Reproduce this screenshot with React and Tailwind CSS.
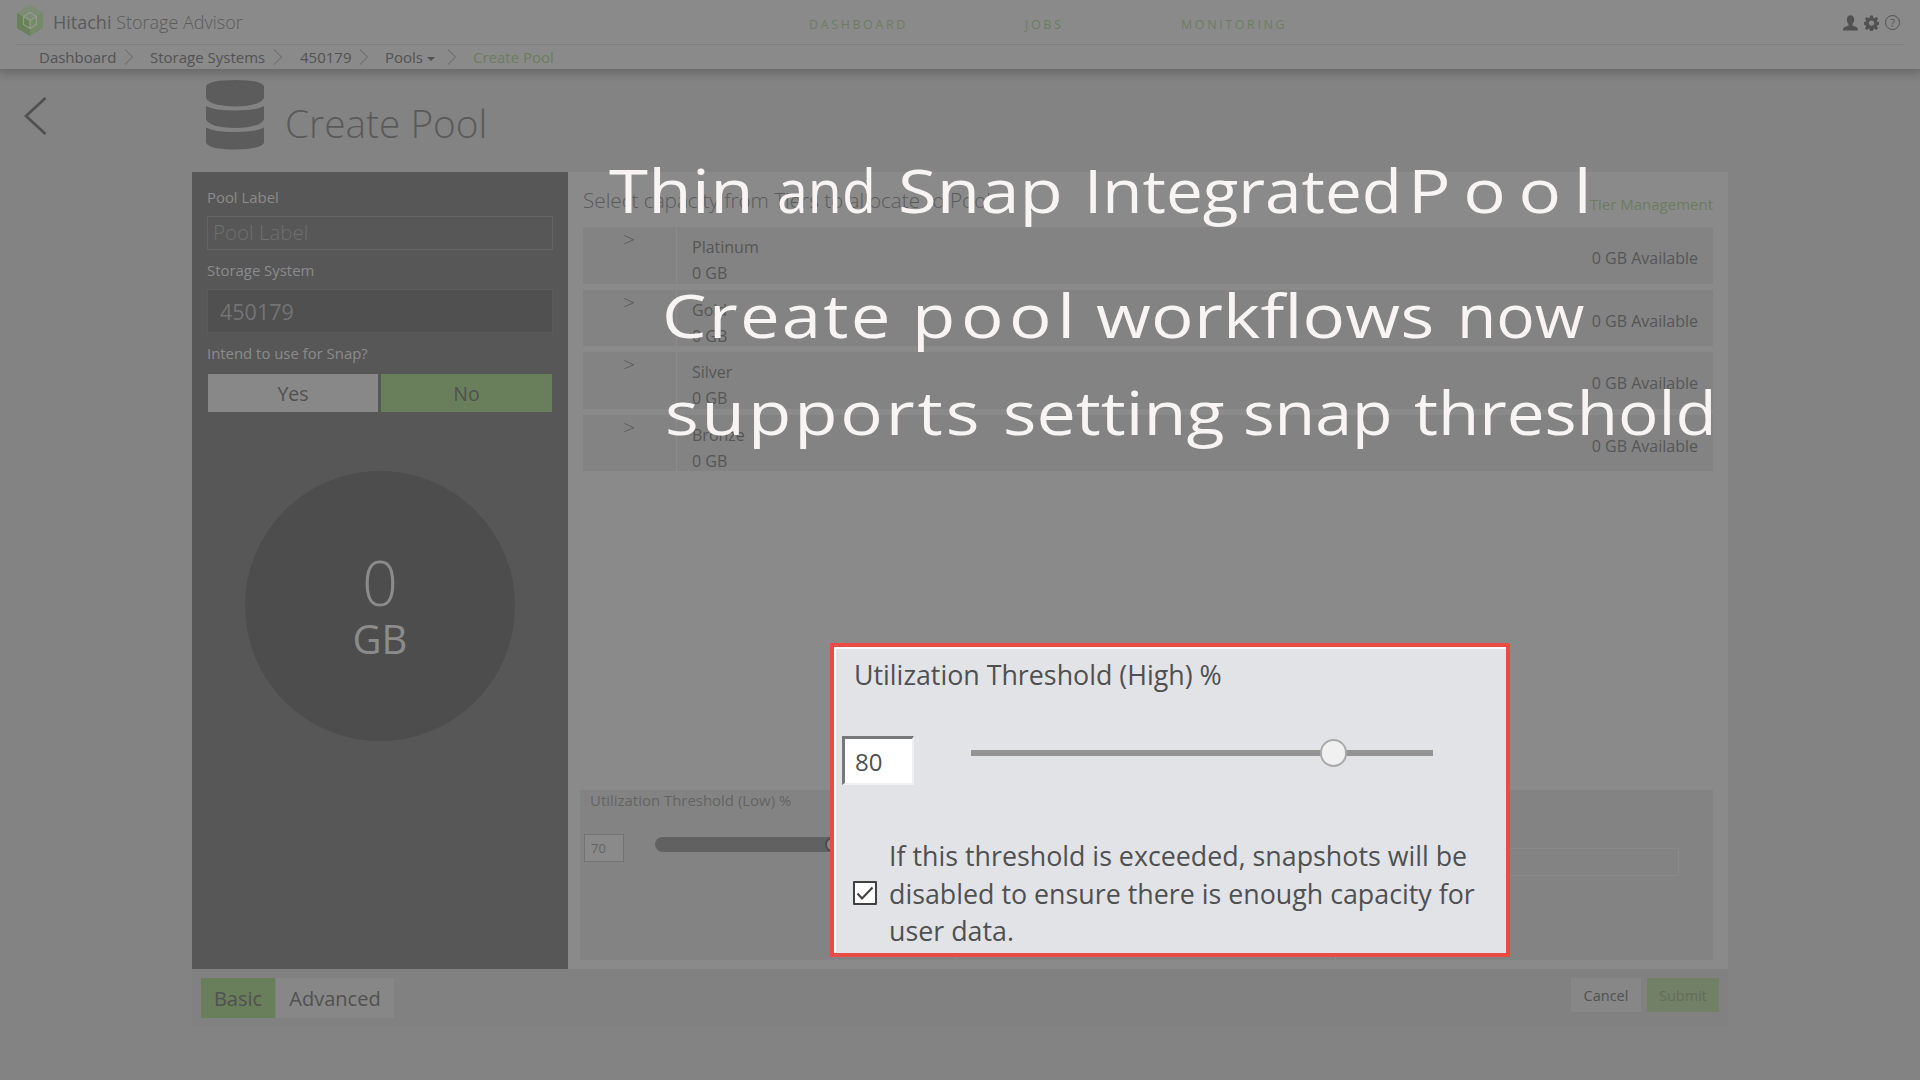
import { useLayoutEffect, useRef } from 'react';

const tiers = [
  { name: 'Platinum', row: 'h-[57px]' },
  { name: 'Gold', row: 'h-[56px]' },
  { name: 'Silver', row: 'h-[57px]' },
  { name: 'Bronze', row: 'h-[56px]' },
];

const notes = [
  { text: 'Thin', x: 609, y: 213, w: 145 },
  { text: 'and', x: 777, y: 213, w: 99 },
  { text: 'Snap', x: 898, y: 213, w: 165 },
  { text: 'Integrated', x: 1084, y: 213, w: 318 },
  { text: 'Pool', x: 1408, y: 213, w: 183 },
  { text: 'Create', x: 662, y: 338, w: 228 },
  { text: 'pool', x: 912, y: 338, w: 163 },
  { text: 'workflows', x: 1096, y: 338, w: 338 },
  { text: 'now', x: 1457, y: 338, w: 127 },
  { text: 'supports', x: 665, y: 435, w: 314 },
  { text: 'setting', x: 1003, y: 435, w: 222 },
  { text: 'snap', x: 1243, y: 435, w: 149 },
  { text: 'threshold', x: 1414, y: 435, w: 303 },
];

// One word of the annotation: widened by up to 18%, then letter-spaced to its width.
function Note({ text, x, y, w }) {
  const ref = useRef(null);
  useLayoutEffect(() => {
    const el = ref.current;
    el.style.letterSpacing = '0px';
    const natural = el.offsetWidth;
    const scale = Math.min(w / natural, 1.18);
    el.style.letterSpacing = `${(w / scale - natural) / (text.length - 1)}px`;
    el.style.transform = `scaleX(${scale})`;
  }, [text, w]);
  return (
    <span
      ref={ref}
      className="absolute origin-left whitespace-nowrap text-[60px] leading-[60px] text-[#f8f4f4]"
      style={{ left: x, top: y - 53 }}
    >
      {text}
    </span>
  );
}

function Chevron({ className }) {
  return (
    <svg className={'h-4 w-[10px] shrink-0 ' + className} viewBox="0 0 10 16" fill="none" stroke="#747474" strokeWidth="1.2">
      <path d="M1 .5 8.5 8 1 15.5" />
    </svg>
  );
}

function Header() {
  return (
    <header className="relative h-[69px] bg-[#8a8a8a] shadow-[0_2px_9px_2px_rgba(60,60,60,0.4)]">
      <div className="mx-[15px] flex h-[45px] border-b border-[#808080]">
        <svg className="mt-[5px] ml-[2px] h-[31px] w-[26px] shrink-0" viewBox="0 0 26 31">
          <path d="M13 0 26 8v15l-13 8L0 23V8z" fill="#758a69" />
          <path d="M0 8 13 15.5V31L0 23z" fill="#698058" />
          <path d="M13 0 26 8 13 15.5 0 8z" fill="#7d8c74" />
          <path d="M13 7.5 19.5 11.5v8L13 23.5l-6.500-4v-8zM6.500 11.500 13 15.500l6.500-4M13 15.500v8" fill="none" stroke="#929c8b" strokeWidth="1.200" />
        </svg>
        <div className="ml-[10px] w-[190px] text-[18px] leading-[45px] font-light whitespace-nowrap text-[#5a5a5a]">
          <span className="font-normal">Hitachi</span> Storage Advisor
        </div>
        <nav className="ml-[566px] flex text-[12.500px] leading-[50px] tracking-[2.600px] text-[#6d7d62]">
          <span className="w-[216px]">DASHBOARD</span>
          <span className="w-[156px]">JOBS</span>
          <span>MONITORING</span>
        </nav>
        <div className="mt-[15px] mr-[5px] ml-auto flex gap-[6px]">
          <svg className="h-4 w-[15px]" viewBox="0 0 15 16" fill="#515151">
            <ellipse cx="7.500" cy="4.800" rx="3.700" ry="4.600" />
            <path d="M5.500 8h4v2.700l4 1.300q1.500.6 1.500 3.500H0q0-2.900 1.500-3.500l4-1.300z" />
          </svg>
          <svg className="h-4 w-[15px]" viewBox="0 0 16 16" fill="#515151" fillRule="evenodd">
            <path d="M6.600 0h2.800l.4 2.200 1.300.6 1.900-1.300 2 2-1.300 1.900.6 1.300 2.200.4v2.800l-2.200.4-.6 1.300 1.300 1.900-2 2-1.900-1.300-1.300.6-.4 2.200H6.600l-.4-2.200-1.300-.6L3 15.500l-2-2 1.300-1.900-.6-1.300-2.200-.4V7.100l2.200-.4.6-1.300L1 3.500l2-2 1.900 1.300 1.300-.6zM8 5.200a2.800 2.800 0 1 0 0 5.600 2.800 2.800 0 0 0 0-5.600z" />
          </svg>
          <div className="flex h-[15px] w-[15px] items-center justify-center rounded-full border border-[#515151] text-[11px] leading-none text-[#515151]">?</div>
        </div>
      </div>
      <div className="flex h-6 items-center pl-[39px] text-[15px] leading-6 whitespace-nowrap text-[#535353]">
        <span className="w-[85px]">Dashboard</span>
        <Chevron className="" />
        <span className="ml-[16px] w-[123px]">Storage Systems</span>
        <Chevron className="" />
        <span className="ml-[17px] w-[59px]">450179</span>
        <Chevron className="" />
        <span className="ml-[16px] w-[42px]">Pools</span>
        <span className="mt-[3px] h-0 w-0 border-x-4 border-t-4 border-x-transparent border-t-[#515151]" />
        <Chevron className="ml-[12px]" />
        <span className="ml-[16px] text-[#6b7d5e]">Create Pool</span>
      </div>
    </header>
  );
}

function Sidebar() {
  return (
    <aside className="w-[376px] bg-[#575757] px-[15px] pt-[15px] text-[#8b8b8b]">
      <div className="h-[29px] text-[14.900px] leading-[20px]">Pool Label</div>
      <div className="h-[34px] border border-[#656565] pl-[5px] text-[20.500px] leading-[31px] font-light text-[#6f6f6f]">Pool Label</div>
      <div className="mt-[10px] h-[29px] text-[14.900px] leading-[20px]">Storage System</div>
      <div className="h-[44px] border border-[#5b5b5b] bg-[#505050] pl-[12px] text-[21.500px] leading-[44px] text-[#747474]">450179</div>
      <div className="mt-[10px] h-[31px] text-[14.900px] leading-[20px]">Intend to use for Snap?</div>
      <div className="mx-px flex gap-[3px] text-center text-[19.500px] leading-[39px] text-[#515151]">
        <div className="h-[38px] w-[170px] bg-[#888888]">Yes</div>
        <div className="h-[38px] flex-1 bg-[#697e5a]">No</div>
      </div>
      <div className="mx-auto mt-[59px] flex h-[270px] w-[270px] flex-col items-center rounded-full bg-[#4d4d4d] pt-[75px]">
        <div className="text-[63px] leading-[72px] font-light">0</div>
        <div className="text-[40px] leading-[42px]">GB</div>
      </div>
    </aside>
  );
}

function Tiers() {
  return (
    <div className="mr-[15px] ml-[15px]">
      <div className="flex h-[55px] justify-between">
        <h2 className="pt-[12px] text-[20.700px] leading-[32px] font-light text-[#5a5a5a]">Select capacity from Tiers to allocate to Pool</h2>
        <span className="pt-[21px] text-[15px] leading-[22px] text-[#6b7d5e]">Tier Management</span>
      </div>
      <div className="flex flex-col gap-[6px] text-[16px] text-[#565656]">
        {tiers.map((t) => (
          <div key={t.name} className={'flex bg-[#838383] ' + t.row}>
            <div className="w-[94px] border-r border-[#8b8b8b] pl-[40px] text-[21px] leading-[24px] font-light">&gt;</div>
            <div className="pt-[7px] pl-[15px] leading-[26px]">
              <div>{t.name}</div>
              <div>0 GB</div>
            </div>
            <div className="mr-[15px] ml-auto leading-[62px]">0 GB Available</div>
          </div>
        ))}
      </div>
    </div>
  );
}

function Thresholds() {
  return (
    <div className="mt-auto mr-[15px] mb-[9px] ml-[12px] flex h-[170px] bg-[#838383] text-[#636363]">
      <div className="w-[377px] border-r border-[#8b8b8b]">
        <div className="pl-[10px] text-[14.950px] leading-[20px]">Utilization Threshold (Low) %</div>
        <div className="mt-[24px] flex">
          <div className="ml-[4px] h-[28px] w-[40px] border border-[#747474] bg-[#8a8a8a] pl-[6px] text-[13px] leading-[27px]">70</div>
          <div className="mt-[3px] ml-[31px] flex h-[15px] w-[250px] rounded-full bg-[#616161]">
            <div className="ml-[170px] h-[15px] w-[15px] rounded-full border-2 border-[#4c4c4c] bg-[#8a8a8a]" />
          </div>
        </div>
      </div>
      <div className="w-[379px] border-r border-[#8b8b8b]" />
      <div className="flex-1 pt-[58px] pr-[34px] pl-[34px]">
        <div className="h-[28px] border border-[#8a8a8a]" />
      </div>
    </div>
  );
}

function Callout() {
  return (
    <section className="absolute top-[643px] left-[830px] h-[314px] w-[680px] border-4 border-[#ea4c44] bg-[#e2e3e7] text-[#4f5052] shadow-[inset_2px_2px_0_#f9f9fb]">
      <div className="pt-[10px] pl-[20px] text-[26.800px] leading-[36px] whitespace-nowrap">Utilization Threshold (High) %</div>
      <div className="mt-[43px] flex">
        <div className="ml-[8px] h-[49px] w-[72px] border-t-[3px] border-r-2 border-b-2 border-l-[3px] border-t-[#77787a] border-r-[#f0f0f2] border-b-[#f0f0f2] border-l-[#77787a] bg-white pl-[10px] text-[24px] leading-[46px]">80</div>
        <div className="relative mt-[14px] ml-[57px] h-[6px] w-[462px] bg-[#949494]">
          <div className="absolute top-[-11px] left-[349px] h-[28px] w-[27px] rounded-full border-2 border-[#aaaaaa] bg-[#f0f0f0]" />
        </div>
      </div>
      <div className="mt-[51px] flex">
        <div className="mt-[45px] ml-[19px] h-[24px] w-[24px] rounded-[1px] border-2 border-[#404143] bg-white">
          <svg className="h-5 w-5" viewBox="0 0 20 20" fill="none" stroke="#404143" strokeWidth="2">
            <path d="M2.500 10.500 7 15.500 17.500 4.500" />
          </svg>
        </div>
        <div className="ml-[12px] pt-px text-[26.800px] leading-[37.600px] whitespace-nowrap">
          <div>If this threshold is exceeded, snapshots will be</div>
          <div>disabled to ensure there is enough capacity for</div>
          <div>user data.</div>
        </div>
      </div>
    </section>
  );
}

export default function App() {
  return (
    <div className="relative flex h-[1080px] w-[1920px] flex-col overflow-hidden bg-[#838383] font-['Open_Sans',sans-serif]">
      <Header />
      <div className="flex h-[103px]">
        <svg className="mt-[28px] ml-[24px] h-[38px] w-[23px]" viewBox="0 0 23 38" fill="none" stroke="#515151" strokeWidth="2.800">
          <path d="M21.500 1 2 19l19.500 18" />
        </svg>
        <svg className="mt-[11px] ml-[159px] h-[70px] w-[58px]" viewBox="0 0 58 70" fill="#5c5c5c">
          <path d="M0 6Q4 0 29 0t29 6v12q-4 8-29 8.500Q4 26 0 18z" />
          <path d="M0 26q8 4.500 29 4.500T58 26v13.500q-4 8-29 8.500-25-.5-29-8.500z" />
          <path d="M0 47.500q8 4.500 29 4.500t29-4.500V63q-4 6.500-29 6.500T0 63z" />
        </svg>
        <h1 className="mt-[27px] ml-[21px] text-[38.800px] leading-[54px] font-light text-[#5a5a5a]">Create Pool</h1>
      </div>
      <main className="mx-[192px]">
        <div className="flex h-[797px]">
          <Sidebar />
          <div className="flex flex-1 flex-col bg-[#8a8a8a]">
            <Tiers />
            <Thresholds />
          </div>
        </div>
        <footer className="flex h-[58px] items-start bg-[#818181] px-[9px] pt-[9px] text-[#515151]">
          <div className="flex gap-px text-center text-[20px] leading-[41px]">
            <div className="h-10 w-[74px] bg-[#697e5a]">Basic</div>
            <div className="h-10 w-[118px] bg-[#878787]">Advanced</div>
          </div>
          <div className="ml-auto flex gap-[6px] text-center text-[14.500px] leading-[35px]">
            <div className="h-[34px] w-[70px] bg-[#878787]">Cancel</div>
            <div className="h-[34px] w-[72px] bg-[#728068] text-[#626d5a]">Submit</div>
          </div>
        </footer>
      </main>
      {notes.map((n) => (
        <Note key={n.text} {...n} />
      ))}
      <Callout />
    </div>
  );
}
